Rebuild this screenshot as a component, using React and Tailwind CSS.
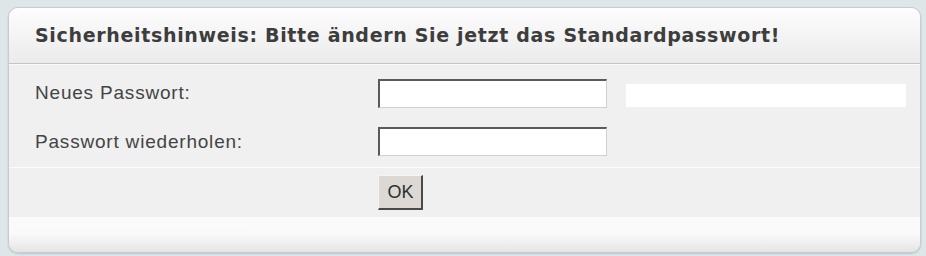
export default function App() {
  return (
    <div className="min-h-screen w-full bg-[#dfe6ea] pl-[8px] pr-[5px] pt-[7px]">
      <div className="h-[246px] rounded-[10px] border border-[#c5ccd0] bg-[#f0f0f0] flex flex-col overflow-hidden shadow-[0_1px_2px_rgba(0,0,0,0.15)]">
        {/* header */}
        <div className="h-[56px] shrink-0 flex items-center pl-[26px] border-b border-[#c4c4c4] bg-gradient-to-b from-[#fdfdfd] to-[#ebebeb]">
          <h1 className="font-['DejaVu_Sans',sans-serif] font-bold text-[19px] text-[#3d3d3d] tracking-[0.67px]">
            Sicherheitshinweis: Bitte ändern Sie jetzt das Standardpasswort!
          </h1>
        </div>

        {/* rows */}
        <div className="font-['Liberation_Sans',Arial,sans-serif] text-[19px] text-[#444] tracking-[0.8px]">
          <div className="h-[51px] flex items-center pl-[26px] border-t border-[#fafafa]">
            <span className="w-[343px] pt-[6px]">Neues Passwort:</span>
            <input
              type="password"
              className="w-[229px] h-[29px] mt-[6px] bg-white border-t-2 border-l-2 border-[#5a5a5a] border-b border-r border-b-[#d0d0d0] border-r-[#d0d0d0] outline-none"
            />
            <div className="ml-[19px] w-[280px] h-[23px] mt-[10px] bg-white" />
          </div>
          <div className="h-[53px] flex items-center pl-[26px] border-b border-[#fbfbfb]">
            <span className="w-[343px] pt-[3px]">Passwort wiederholen:</span>
            <input
              type="password"
              className="w-[229px] h-[29px] bg-white border-t-2 border-l-2 border-[#5a5a5a] border-b border-r border-b-[#d0d0d0] border-r-[#d0d0d0] outline-none"
            />
          </div>
          <div className="h-[49px] flex items-center pl-[369px]">
            <button className="w-[45px] h-[35px] pl-[1px] bg-[#dcd9d4] border-t border-l border-[#f4f4f4] border-b-2 border-r-2 border-b-[#4a4a4a] border-r-[#4a4a4a] font-['Liberation_Sans',Arial,sans-serif] text-[18px] tracking-normal text-[#2e2e2e]">
              OK
            </button>
          </div>
        </div>

        {/* footer */}
        <div className="flex-1 bg-gradient-to-b from-[#fbfbfb] via-[#f9f9f9] to-[#e4e4e4]" />
      </div>
    </div>
  );
}
